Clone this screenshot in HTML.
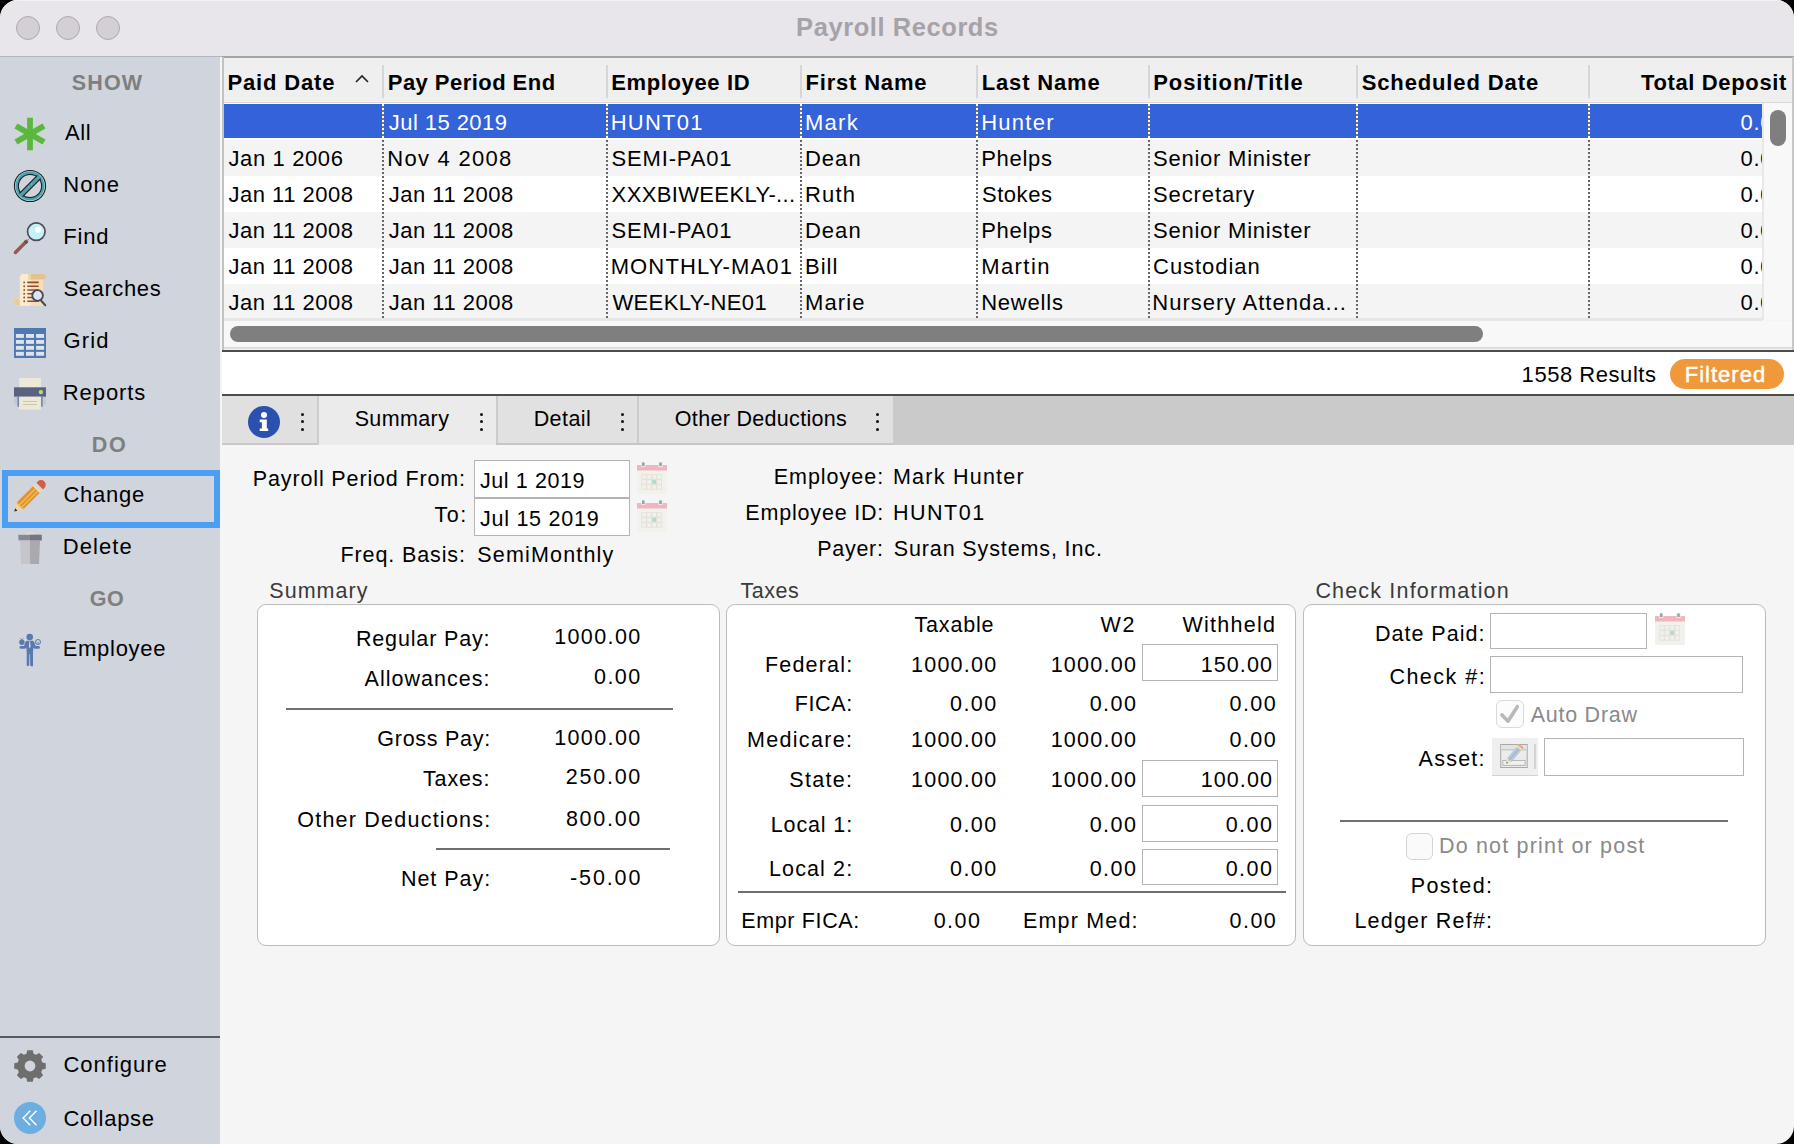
<!DOCTYPE html>
<html><head><meta charset="utf-8"><title>Payroll Records</title>
<style>
html,body{margin:0;padding:0;width:1794px;height:1144px;overflow:hidden;background:#000;}
#win{position:absolute;left:0;top:0;width:1794px;height:1144px;border-radius:18px;overflow:hidden;background:#f5f5f5;font-family:"Liberation Sans",sans-serif;}
.t{position:absolute;white-space:pre;font-family:"Liberation Sans",sans-serif;}
.r{position:absolute;box-sizing:border-box;}
svg{position:absolute;overflow:visible;}

</style></head><body>
<div id="win">
<div class="r" style="left:0px;top:0px;width:1794px;height:56px;background:#e8e6eb;"></div><div class="r" style="left:0px;top:0px;width:1794px;height:1px;background:#f3f1f5;"></div><div class="r" style="left:0px;top:56px;width:1794px;height:1px;background:#b3b5bc;"></div><svg style="left:15px;top:15px" width="26" height="26"><circle cx="13" cy="13" r="11.5" fill="#d4cfd5" stroke="#aea8ae" stroke-width="1"/></svg><svg style="left:55px;top:15px" width="26" height="26"><circle cx="13" cy="13" r="11.5" fill="#d4cfd5" stroke="#aea8ae" stroke-width="1"/></svg><svg style="left:95px;top:15px" width="26" height="26"><circle cx="13" cy="13" r="11.5" fill="#d4cfd5" stroke="#aea8ae" stroke-width="1"/></svg><div class="r" style="left:0px;top:57px;width:220px;height:1087px;background:#cfd4dd;"></div><div class="r" style="left:0px;top:1036px;width:220px;height:2px;background:#555a60;"></div><div class="r" style="left:2px;top:470px;width:218px;height:58px;border:6px solid #4a9ff5;"></div><div class="r" style="left:222px;top:57px;width:1572px;height:295px;background:#f5f5f5;"></div><div class="r" style="left:222px;top:56px;width:1572px;height:2px;background:#a4a4a4;"></div><div class="r" style="left:222px;top:57px;width:2px;height:293px;background:#c2c2c2;"></div><div class="r" style="left:1792px;top:57px;width:2px;height:293px;background:#c8c8c8;"></div><div class="r" style="left:224px;top:58px;width:1568px;height:44px;background:#efefef;"></div><div class="r" style="left:224px;top:102px;width:1568px;height:2px;background:#dad8d3;"></div><div class="r" style="left:224px;top:103px;width:1538px;height:216px;background:#ffffff;"></div><div class="r" style="left:224px;top:104px;width:1538px;height:34px;background:#3362d9;"></div><div class="r" style="left:224px;top:140px;width:1538px;height:36px;background:#f3f4f3;"></div><div class="r" style="left:224px;top:176px;width:1538px;height:36px;background:#ffffff;"></div><div class="r" style="left:224px;top:212px;width:1538px;height:36px;background:#f3f4f3;"></div><div class="r" style="left:224px;top:248px;width:1538px;height:36px;background:#ffffff;"></div><div class="r" style="left:224px;top:284px;width:1538px;height:34px;background:#f3f4f3;"></div><div class="r" style="left:224px;top:318px;width:1538px;height:3px;background:#e6e6e6;"></div><div class="r" style="left:224px;top:321px;width:1568px;height:26px;background:#f8f8f8;"></div><div class="r" style="left:224px;top:347px;width:1568px;height:2px;background:#dedede;"></div><div class="r" style="left:222px;top:350px;width:1572px;height:2px;background:#4c4c4c;"></div><div class="r" style="left:1762px;top:103px;width:30px;height:217px;background:#f8f8f8;"></div><div class="r" style="left:1762px;top:103px;width:2px;height:217px;background:#e8e8e8;"></div><div class="r" style="left:1770px;top:110px;width:16px;height:36px;border-radius:8px;background:#7f7f7f"></div><div class="r" style="left:230px;top:326px;width:1253px;height:16px;border-radius:8px;background:#7f7f7f"></div><div class="r" style="left:382px;top:65px;width:2px;height:33px;background:#d6d6d6;"></div><div class="r" style="left:382px;top:104px;width:2px;height:34px;background:repeating-linear-gradient(to bottom,#fff 0,#fff 2px,#7a7468 2px,#7a7468 4px)"></div><div class="r" style="left:382px;top:140px;width:2px;height:178px;background:repeating-linear-gradient(to bottom,#666 0,#666 2px,transparent 2px,transparent 4px)"></div><div class="r" style="left:606px;top:65px;width:2px;height:33px;background:#d6d6d6;"></div><div class="r" style="left:606px;top:104px;width:2px;height:34px;background:repeating-linear-gradient(to bottom,#fff 0,#fff 2px,#7a7468 2px,#7a7468 4px)"></div><div class="r" style="left:606px;top:140px;width:2px;height:178px;background:repeating-linear-gradient(to bottom,#666 0,#666 2px,transparent 2px,transparent 4px)"></div><div class="r" style="left:800px;top:65px;width:2px;height:33px;background:#d6d6d6;"></div><div class="r" style="left:800px;top:104px;width:2px;height:34px;background:repeating-linear-gradient(to bottom,#fff 0,#fff 2px,#7a7468 2px,#7a7468 4px)"></div><div class="r" style="left:800px;top:140px;width:2px;height:178px;background:repeating-linear-gradient(to bottom,#666 0,#666 2px,transparent 2px,transparent 4px)"></div><div class="r" style="left:976px;top:65px;width:2px;height:33px;background:#d6d6d6;"></div><div class="r" style="left:976px;top:104px;width:2px;height:34px;background:repeating-linear-gradient(to bottom,#fff 0,#fff 2px,#7a7468 2px,#7a7468 4px)"></div><div class="r" style="left:976px;top:140px;width:2px;height:178px;background:repeating-linear-gradient(to bottom,#666 0,#666 2px,transparent 2px,transparent 4px)"></div><div class="r" style="left:1148px;top:65px;width:2px;height:33px;background:#d6d6d6;"></div><div class="r" style="left:1148px;top:104px;width:2px;height:34px;background:repeating-linear-gradient(to bottom,#fff 0,#fff 2px,#7a7468 2px,#7a7468 4px)"></div><div class="r" style="left:1148px;top:140px;width:2px;height:178px;background:repeating-linear-gradient(to bottom,#666 0,#666 2px,transparent 2px,transparent 4px)"></div><div class="r" style="left:1356px;top:65px;width:2px;height:33px;background:#d6d6d6;"></div><div class="r" style="left:1356px;top:104px;width:2px;height:34px;background:repeating-linear-gradient(to bottom,#fff 0,#fff 2px,#7a7468 2px,#7a7468 4px)"></div><div class="r" style="left:1356px;top:140px;width:2px;height:178px;background:repeating-linear-gradient(to bottom,#666 0,#666 2px,transparent 2px,transparent 4px)"></div><div class="r" style="left:1588px;top:65px;width:2px;height:33px;background:#d6d6d6;"></div><div class="r" style="left:1588px;top:104px;width:2px;height:34px;background:repeating-linear-gradient(to bottom,#fff 0,#fff 2px,#7a7468 2px,#7a7468 4px)"></div><div class="r" style="left:1588px;top:140px;width:2px;height:178px;background:repeating-linear-gradient(to bottom,#666 0,#666 2px,transparent 2px,transparent 4px)"></div><svg style="left:354px;top:74px" width="16" height="10"><polyline points="2,8 8,2 14,8" fill="none" stroke="#222" stroke-width="1.6"/></svg><div class="r" style="left:222px;top:352px;width:1572px;height:42px;background:#ffffff;"></div><div class="r" style="left:222px;top:394px;width:1572px;height:2px;background:#4c4c4c;"></div><div class="r" style="left:1670px;top:359px;width:114px;height:30px;border-radius:15px;background:#f0993a"></div><div class="r" style="left:222px;top:396px;width:1572px;height:49px;background:#cacaca;"></div><div class="r" style="left:222px;top:396px;width:95px;height:47px;background:#e0e0e0;"></div><div class="r" style="left:222px;top:443px;width:97px;height:2px;background:#c8c8c8;"></div><div class="r" style="left:317px;top:396px;width:2px;height:49px;background:#cdcdcd;"></div><div class="r" style="left:319px;top:396px;width:177px;height:49px;background:#ebebeb;"></div><div class="r" style="left:498px;top:396px;width:139px;height:47px;background:#e1e1e1;"></div><div class="r" style="left:496px;top:396px;width:2px;height:49px;background:#cbcbcb;"></div><div class="r" style="left:496px;top:443px;width:397px;height:2px;background:#c6c6c6;"></div><div class="r" style="left:639px;top:396px;width:254px;height:47px;background:#e1e1e1;"></div><div class="r" style="left:637px;top:396px;width:2px;height:47px;background:#cbcbcb;"></div><svg style="left:247.8px;top:405.8px" width="32" height="32"><circle cx="16" cy="16" r="16" fill="#2b51b0"/><circle cx="16" cy="8.9" r="3" fill="#fff"/><path d="M11.7 13.6 H18.8 V22.4 H20.2 V25.1 H11.7 V22.4 H13.9 V16.2 H11.7 Z" fill="#fff"/></svg><div class="r" style="left:300.5px;top:412.5px;width:3px;height:3px;border-radius:50%;background:#111"></div><div class="r" style="left:300.5px;top:420.0px;width:3px;height:3px;border-radius:50%;background:#111"></div><div class="r" style="left:300.5px;top:427.5px;width:3px;height:3px;border-radius:50%;background:#111"></div><div class="r" style="left:479.6px;top:412.5px;width:3px;height:3px;border-radius:50%;background:#111"></div><div class="r" style="left:479.6px;top:420.0px;width:3px;height:3px;border-radius:50%;background:#111"></div><div class="r" style="left:479.6px;top:427.5px;width:3px;height:3px;border-radius:50%;background:#111"></div><div class="r" style="left:620.8px;top:412.5px;width:3px;height:3px;border-radius:50%;background:#111"></div><div class="r" style="left:620.8px;top:420.0px;width:3px;height:3px;border-radius:50%;background:#111"></div><div class="r" style="left:620.8px;top:427.5px;width:3px;height:3px;border-radius:50%;background:#111"></div><div class="r" style="left:876.3px;top:412.5px;width:3px;height:3px;border-radius:50%;background:#111"></div><div class="r" style="left:876.3px;top:420.0px;width:3px;height:3px;border-radius:50%;background:#111"></div><div class="r" style="left:876.3px;top:427.5px;width:3px;height:3px;border-radius:50%;background:#111"></div><div class="r" style="left:474px;top:460px;width:156px;height:38px;background:#fff;border:1px solid #b4b4b4"></div><div class="r" style="left:474px;top:498px;width:156px;height:38px;background:#fff;border:1px solid #b4b4b4"></div><div class="r" style="left:256.5px;top:604px;width:463.0px;height:342px;background:#fff;border:1px solid #bcbcbc;border-radius:9px"></div><div class="r" style="left:726px;top:604px;width:569.5px;height:342px;background:#fff;border:1px solid #bcbcbc;border-radius:9px"></div><div class="r" style="left:1302.5px;top:604px;width:463.0px;height:342px;background:#fff;border:1px solid #bcbcbc;border-radius:9px"></div><div class="r" style="left:285.8px;top:707.8px;width:387.7px;height:2px;background:#6f6f6f"></div><div class="r" style="left:435.8px;top:847.9px;width:234.2px;height:2px;background:#6f6f6f"></div><div class="r" style="left:1142px;top:644.3px;width:135.5999999999999px;height:37.200000000000045px;background:#fff;border:1px solid #b4b4b4"></div><div class="r" style="left:1142px;top:760.2px;width:135.5999999999999px;height:37.09999999999991px;background:#fff;border:1px solid #b4b4b4"></div><div class="r" style="left:1142px;top:804.5px;width:135.5999999999999px;height:37.10000000000002px;background:#fff;border:1px solid #b4b4b4"></div><div class="r" style="left:1142px;top:848.5px;width:135.5999999999999px;height:36.799999999999955px;background:#fff;border:1px solid #b4b4b4"></div><div class="r" style="left:738px;top:891.1px;width:547.8px;height:2px;background:#6f6f6f"></div><div class="r" style="left:1490.1px;top:612.6px;width:157.20000000000005px;height:36.799999999999955px;background:#fff;border:1px solid #b4b4b4"></div><div class="r" style="left:1490.1px;top:656.3px;width:253.4000000000001px;height:37.10000000000002px;background:#fff;border:1px solid #b4b4b4"></div><div class="r" style="left:1496.1px;top:700.2px;width:27.5px;height:27.5px;border:1px solid #dadada;border-radius:6px;background:#fcfcfc"></div><svg style="left:1496px;top:700px" width="28" height="28"><polyline points="6,14.9 12,21.2 21.3,6.7" fill="none" stroke="#b9b9b9" stroke-width="3.6" stroke-linecap="round" stroke-linejoin="round"/></svg><div class="r" style="left:1492.2px;top:738px;width:45.7px;height:37.6px;background:#efefef;border-bottom:1.5px solid #d2d2d2"></div><div class="r" style="left:1544px;top:738px;width:199.5px;height:37.60000000000002px;background:#fff;border:1px solid #b4b4b4"></div><div class="r" style="left:1340.1px;top:819.6px;width:388.0px;height:2px;background:#6f6f6f"></div><div class="r" style="left:1405.9px;top:832.5px;width:27.3px;height:27.3px;border:1px solid #d4d4d4;border-radius:6px;background:#fafafa"></div><svg style="left:0;top:0" width="220" height="1144"><g stroke="#5bb83d" stroke-linecap="butt"><line x1="30.00" y1="117.80" x2="30.00" y2="150.20" stroke-width="5.8"/><line x1="15.97" y1="125.90" x2="44.03" y2="142.10" stroke-width="5.8"/><line x1="15.97" y1="142.10" x2="44.03" y2="125.90" stroke-width="5.8"/></g><circle cx="30" cy="186" r="16.1" fill="#141a1c"/><circle cx="30" cy="186" r="15.1" fill="#8ed6e0"/><circle cx="30" cy="186" r="14.3" fill="#4f9eaa"/><circle cx="30" cy="186" r="12.1" fill="#141a1c"/><circle cx="30" cy="186" r="11.1" fill="#cfd4dd"/><line x1="39" y1="177" x2="21" y2="195" stroke="#141a1c" stroke-width="5.6"/><line x1="39.5" y1="176.5" x2="20.5" y2="195.5" stroke="#4f9eaa" stroke-width="3.6"/><circle cx="30" cy="186" r="14.3" fill="none" stroke="#4f9eaa" stroke-width="0"/><rect x="28.2" y="186.6" width="0.9" height="0.9" fill="#a9dde4"/><rect x="31.2" y="183.6" width="0.9" height="0.9" fill="#a9dde4"/><line x1="15.4" y1="252.5" x2="26.6" y2="241.3" stroke="#925c4a" stroke-width="3.5" stroke-linecap="round"/><line x1="25.2" y1="242.7" x2="26.6" y2="241.3" stroke="#5a4a58" stroke-width="3.5"/><line x1="26.6" y1="241.3" x2="29" y2="238.9" stroke="#8a8290" stroke-width="1"/><circle cx="36.3" cy="231.6" r="8.75" fill="#c5f0fb" stroke="#524a5c" stroke-width="1.7"/><circle cx="38" cy="229.7" r="3" fill="#fff"/><path d="M24 274 H43 Q46 274 46 276.7 Q46 279.4 43 279.4 H42.7 V305.8 H17 Q14.2 305.8 14.2 303 V298.5 H19.8 V278 Q19.8 274 24 274 Z" fill="#fdebd0"/><path d="M31 274 H43 Q46 274 46 276.7 Q46 279.4 43 279.4 H42.7 V305.8 H31 Z" fill="#f8dcb2"/><path d="M28.5 274 H43 Q46 274 46 276.7 Q46 279.4 43 279.4 H28.5 Z" fill="#e3c193"/><path d="M28.5 274 H31 V279.4 H28.5 Z" fill="#f0d4a8"/><path d="M14.2 298.5 H19.8 V305.8 H17 Q14.2 305.8 14.2 303 Z" fill="#edcb98"/><circle cx="24.2" cy="282.40" r="0.95" fill="#8e4f2e"/><path d="M27.4 281.60 H38.3 L38.9 282.40 L38.3 283.20 H27.4 Q27 282.40 27.4 281.60 Z" fill="#8e4f2e"/><circle cx="24.2" cy="286.18" r="0.95" fill="#8e4f2e"/><path d="M27.4 285.38 H38.3 L38.9 286.18 L38.3 286.98 H27.4 Q27 286.18 27.4 285.38 Z" fill="#8e4f2e"/><circle cx="24.2" cy="289.96" r="0.95" fill="#8e4f2e"/><path d="M27.4 289.16 H38.3 L38.9 289.96 L38.3 290.76 H27.4 Q27 289.96 27.4 289.16 Z" fill="#8e4f2e"/><circle cx="24.2" cy="293.74" r="0.95" fill="#8e4f2e"/><path d="M27.4 292.94 H38.3 L38.9 293.74 L38.3 294.54 H27.4 Q27 293.74 27.4 292.94 Z" fill="#8e4f2e"/><circle cx="24.2" cy="297.52" r="0.95" fill="#8e4f2e"/><path d="M27.4 296.72 H38.3 L38.9 297.52 L38.3 298.32 H27.4 Q27 297.52 27.4 296.72 Z" fill="#8e4f2e"/><circle cx="24.2" cy="301.30" r="0.95" fill="#8e4f2e"/><path d="M27.4 300.50 H38.3 L38.9 301.30 L38.3 302.10 H27.4 Q27 301.30 27.4 300.50 Z" fill="#8e4f2e"/><line x1="41.2" y1="300.8" x2="45.3" y2="305.2" stroke="#454b55" stroke-width="2" stroke-linecap="round"/><circle cx="37.6" cy="295.5" r="5.3" fill="#dfe5f3" stroke="#454b55" stroke-width="1.8"/><rect x="14" y="328" width="32" height="30" fill="#4f78b1"/><rect x="15.9" y="334.00" width="8" height="3.9" fill="#dfe3ec"/><rect x="15.9" y="339.95" width="8" height="3.9" fill="#dfe3ec"/><rect x="15.9" y="345.90" width="8" height="3.9" fill="#dfe3ec"/><rect x="15.9" y="351.85" width="8" height="3.9" fill="#dfe3ec"/><rect x="26.0" y="334.00" width="8" height="3.9" fill="#dfe3ec"/><rect x="26.0" y="339.95" width="8" height="3.9" fill="#dfe3ec"/><rect x="26.0" y="345.90" width="8" height="3.9" fill="#dfe3ec"/><rect x="26.0" y="351.85" width="8" height="3.9" fill="#dfe3ec"/><rect x="36.1" y="334.00" width="8" height="3.9" fill="#dfe3ec"/><rect x="36.1" y="339.95" width="8" height="3.9" fill="#dfe3ec"/><rect x="36.1" y="345.90" width="8" height="3.9" fill="#dfe3ec"/><rect x="36.1" y="351.85" width="8" height="3.9" fill="#dfe3ec"/><rect x="19.2" y="378" width="21.7" height="10" fill="#ece9d9"/><rect x="14" y="387.3" width="32" height="9.5" fill="#5a6181"/><circle cx="40.9" cy="392.1" r="2.2" fill="#a6e36f"/><rect x="14" y="396.8" width="32" height="7.7" fill="#c8c9cc"/><rect x="17.5" y="396.8" width="1.4" height="10" fill="#6a78b8"/><rect x="41.2" y="396.8" width="1.4" height="10" fill="#6a78b8"/><rect x="19.2" y="396.8" width="21.7" height="12.8" fill="#ece9d9"/><rect x="23" y="401" width="14" height="0.9" fill="#c9c39f"/><rect x="23" y="404" width="14" height="0.9" fill="#c9c39f"/><g transform="translate(14.2,511.6) rotate(-45)"><polygon points="0,0 8.5,-4.7 8.5,4.7" fill="#f6d2a2"/><polygon points="0,0 3,-1.65 3,1.65" fill="#333"/><polygon points="7,-3.9 8.5,-4.7 8.5,4.7 7,3.9" fill="#e9c86a"/><rect x="8.5" y="-4.7" width="23" height="9.4" fill="#e8922f"/><rect x="8.5" y="-1.7" width="23" height="1.1" fill="#eec85a"/><rect x="8.5" y="1.7" width="23" height="1.1" fill="#eec85a"/><rect x="31.5" y="-4.7" width="4.6" height="9.4" fill="#efe7c0"/><rect x="32.9" y="-4.7" width="0.9" height="9.4" fill="#c9ccd0"/><rect x="34.7" y="-4.7" width="0.9" height="9.4" fill="#c9ccd0"/><path d="M36.1 -4.7 H38 A4.7 4.7 0 0 1 38 4.7 H36.1 Z" fill="#cf5f4c"/></g><rect x="26" y="532" width="8.5" height="2.6" fill="#d9d9db"/><rect x="18.4" y="534.8" width="23.2" height="5.6" fill="#89888e"/><rect x="30" y="534.8" width="11.6" height="5.6" fill="#76757e"/><polygon points="20,540.7 30,540.7 30,564 21,564" fill="#c6c6ca"/><polygon points="30,540.7 40,540.7 39,564 30,564" fill="#a9a9ae"/><g fill="#5a79ae"><circle cx="29.7" cy="637" r="3.3"/><path d="M27 640.8 H32.6 Q33.6 640.8 34.4 642.6 L35.6 646.1 H38.6 A1.3 1.3 0 0 1 38.6 648.7 H34.8 Q33.6 648.7 33.4 647.6 L33 652.6 V665 A1 1 0 0 1 31 665.8 H30.2 L30 654 H29.4 L29.2 665.8 H28.3 A1 1 0 0 1 26.7 665 V652.6 L26.3 647.6 Q26 648.7 24.8 648.7 H20.8 A1.3 1.3 0 0 1 20.8 646.1 H24.1 L25.2 642.6 Q26 640.8 27 640.8 Z"/><circle cx="21.9" cy="642.3" r="2.7"/><path d="M20.3 638.3 L21.9 639.8 L23.5 638.3" stroke="#5a79ae" stroke-width="0.8" fill="none"/></g><polygon points="29.3,641.2 30.1,641.2 30.5,647 29.7,648 28.9,647" fill="#d8dce6"/><circle cx="38" cy="642" r="2.5" fill="none" stroke="#5a79ae" stroke-width="1"/><path d="M36.8 642.6 Q38 643.8 39.2 642.6" stroke="#5a79ae" stroke-width="0.8" fill="none"/><polygon points="26.47,1053.70 27.22,1050.24 32.78,1050.24 33.53,1053.70 36.21,1054.80 39.18,1052.89 43.11,1056.82 41.20,1059.79 42.30,1062.47 45.76,1063.22 45.76,1068.78 42.30,1069.53 41.20,1072.21 43.11,1075.18 39.18,1079.11 36.21,1077.20 33.53,1078.30 32.78,1081.76 27.22,1081.76 26.47,1078.30 23.79,1077.20 20.82,1079.11 16.89,1075.18 18.80,1072.21 17.70,1069.53 14.24,1068.78 14.24,1063.22 17.70,1062.47 18.80,1059.79 16.89,1056.82 20.82,1052.89 23.79,1054.80" fill="#6e6e6e"/><circle cx="30" cy="1066" r="5.4" fill="#cfd4dd"/><circle cx="30" cy="1117.9" r="16" fill="#6daee0"/><polyline points="30.2,1110.8 23.1,1118 30.2,1125.2" fill="none" stroke="#fff" stroke-width="1.4"/><polyline points="36.5,1110.8 29.4,1118 36.5,1125.2" fill="none" stroke="#fff" stroke-width="1.4"/></svg><svg style="left:637px;top:461.5px" width="30" height="33"><rect x="0" y="3" width="30" height="29" fill="#f2f1ec"/><rect x="0" y="3" width="30" height="5.5" fill="#efb6bf"/><rect x="4.6" y="0" width="3.4" height="4.5" fill="#9aa0ad" stroke="#f5f5f5" stroke-width="0.8"/><rect x="21.8" y="0" width="3.4" height="4.5" fill="#9aa0ad" stroke="#f5f5f5" stroke-width="0.8"/><rect x="4.8" y="12.6" width="4.4" height="4.4" fill="#f2f1ec" stroke="#e2e0d6" stroke-width="0.8"/><rect x="4.8" y="17.7" width="4.4" height="4.4" fill="#f2f1ec" stroke="#e2e0d6" stroke-width="0.8"/><rect x="4.8" y="22.8" width="4.4" height="4.4" fill="#f2f1ec" stroke="#e2e0d6" stroke-width="0.8"/><rect x="9.9" y="12.6" width="4.4" height="4.4" fill="#f2f1ec" stroke="#e2e0d6" stroke-width="0.8"/><rect x="9.9" y="17.7" width="4.4" height="4.4" fill="#f2f1ec" stroke="#e2e0d6" stroke-width="0.8"/><rect x="9.9" y="22.8" width="4.4" height="4.4" fill="#f2f1ec" stroke="#e2e0d6" stroke-width="0.8"/><rect x="15.0" y="12.6" width="4.4" height="4.4" fill="#f2f1ec" stroke="#e2e0d6" stroke-width="0.8"/><rect x="15.0" y="17.7" width="4.4" height="4.4" fill="#a9dccf" stroke="#e2e0d6" stroke-width="0.8"/><rect x="15.0" y="22.8" width="4.4" height="4.4" fill="#f2f1ec" stroke="#e2e0d6" stroke-width="0.8"/><rect x="20.1" y="12.6" width="4.4" height="4.4" fill="#f2f1ec" stroke="#e2e0d6" stroke-width="0.8"/><rect x="20.1" y="17.7" width="4.4" height="4.4" fill="#f2f1ec" stroke="#e2e0d6" stroke-width="0.8"/><rect x="20.1" y="22.8" width="4.4" height="4.4" fill="#f2f1ec" stroke="#e2e0d6" stroke-width="0.8"/></svg><svg style="left:637px;top:499.5px" width="30" height="33"><rect x="0" y="3" width="30" height="29" fill="#f2f1ec"/><rect x="0" y="3" width="30" height="5.5" fill="#efb6bf"/><rect x="4.6" y="0" width="3.4" height="4.5" fill="#9aa0ad" stroke="#f5f5f5" stroke-width="0.8"/><rect x="21.8" y="0" width="3.4" height="4.5" fill="#9aa0ad" stroke="#f5f5f5" stroke-width="0.8"/><rect x="4.8" y="12.6" width="4.4" height="4.4" fill="#f2f1ec" stroke="#e2e0d6" stroke-width="0.8"/><rect x="4.8" y="17.7" width="4.4" height="4.4" fill="#f2f1ec" stroke="#e2e0d6" stroke-width="0.8"/><rect x="4.8" y="22.8" width="4.4" height="4.4" fill="#f2f1ec" stroke="#e2e0d6" stroke-width="0.8"/><rect x="9.9" y="12.6" width="4.4" height="4.4" fill="#f2f1ec" stroke="#e2e0d6" stroke-width="0.8"/><rect x="9.9" y="17.7" width="4.4" height="4.4" fill="#f2f1ec" stroke="#e2e0d6" stroke-width="0.8"/><rect x="9.9" y="22.8" width="4.4" height="4.4" fill="#f2f1ec" stroke="#e2e0d6" stroke-width="0.8"/><rect x="15.0" y="12.6" width="4.4" height="4.4" fill="#f2f1ec" stroke="#e2e0d6" stroke-width="0.8"/><rect x="15.0" y="17.7" width="4.4" height="4.4" fill="#a9dccf" stroke="#e2e0d6" stroke-width="0.8"/><rect x="15.0" y="22.8" width="4.4" height="4.4" fill="#f2f1ec" stroke="#e2e0d6" stroke-width="0.8"/><rect x="20.1" y="12.6" width="4.4" height="4.4" fill="#f2f1ec" stroke="#e2e0d6" stroke-width="0.8"/><rect x="20.1" y="17.7" width="4.4" height="4.4" fill="#f2f1ec" stroke="#e2e0d6" stroke-width="0.8"/><rect x="20.1" y="22.8" width="4.4" height="4.4" fill="#f2f1ec" stroke="#e2e0d6" stroke-width="0.8"/></svg><svg style="left:1654.8px;top:613px" width="30" height="33"><rect x="0" y="3" width="30" height="29" fill="#f2f1ec"/><rect x="0" y="3" width="30" height="5.5" fill="#efb6bf"/><rect x="4.6" y="0" width="3.4" height="4.5" fill="#9aa0ad" stroke="#f5f5f5" stroke-width="0.8"/><rect x="21.8" y="0" width="3.4" height="4.5" fill="#9aa0ad" stroke="#f5f5f5" stroke-width="0.8"/><rect x="4.8" y="12.6" width="4.4" height="4.4" fill="#f2f1ec" stroke="#e2e0d6" stroke-width="0.8"/><rect x="4.8" y="17.7" width="4.4" height="4.4" fill="#f2f1ec" stroke="#e2e0d6" stroke-width="0.8"/><rect x="4.8" y="22.8" width="4.4" height="4.4" fill="#f2f1ec" stroke="#e2e0d6" stroke-width="0.8"/><rect x="9.9" y="12.6" width="4.4" height="4.4" fill="#f2f1ec" stroke="#e2e0d6" stroke-width="0.8"/><rect x="9.9" y="17.7" width="4.4" height="4.4" fill="#f2f1ec" stroke="#e2e0d6" stroke-width="0.8"/><rect x="9.9" y="22.8" width="4.4" height="4.4" fill="#f2f1ec" stroke="#e2e0d6" stroke-width="0.8"/><rect x="15.0" y="12.6" width="4.4" height="4.4" fill="#f2f1ec" stroke="#e2e0d6" stroke-width="0.8"/><rect x="15.0" y="17.7" width="4.4" height="4.4" fill="#a9dccf" stroke="#e2e0d6" stroke-width="0.8"/><rect x="15.0" y="22.8" width="4.4" height="4.4" fill="#f2f1ec" stroke="#e2e0d6" stroke-width="0.8"/><rect x="20.1" y="12.6" width="4.4" height="4.4" fill="#f2f1ec" stroke="#e2e0d6" stroke-width="0.8"/><rect x="20.1" y="17.7" width="4.4" height="4.4" fill="#f2f1ec" stroke="#e2e0d6" stroke-width="0.8"/><rect x="20.1" y="22.8" width="4.4" height="4.4" fill="#f2f1ec" stroke="#e2e0d6" stroke-width="0.8"/></svg><svg style="left:1492px;top:738px" width="46" height="38"><rect x="8.7" y="6.5" width="26.5" height="23" fill="#ececec" stroke="#a9a9a9" stroke-width="1"/><rect x="9.2" y="7" width="25.5" height="4.6" fill="#e3e3e3"/><rect x="9.2" y="11.4" width="25.5" height="0.9" fill="#b5b5b5"/><rect x="10.8" y="22.4" width="22.3" height="5" fill="#f0f0f0" stroke="#b0b0b0" stroke-width="0.9"/><g transform="translate(14.4,25.6) rotate(-50)"><polygon points="0,0 4.5,-3 4.5,3" fill="#f1e7a0"/><polygon points="0,0 1.6,-1.1 1.6,1.1" fill="#555"/><rect x="4.5" y="-3" width="15" height="6" fill="#b9c7dd"/><rect x="4.5" y="-0.6" width="15" height="1.2" fill="#a3b3cc"/><rect x="19.5" y="-3" width="1.8" height="6" fill="#f1e58a"/><rect x="21.3" y="-3" width="2.2" height="6" fill="#eba39a"/></g><rect x="42.2" y="6" width="1.5" height="25" fill="#cbcbcb"/></svg>
<div class="t" style="left:796.09px;top:15.00px;font-size:25.5px;line-height:25.5px;font-weight:700;color:#a6a2a8;letter-spacing:0.568px;">Payroll Records</div>
<div class="t" style="left:71.75px;top:73.30px;font-size:21.5px;line-height:21.5px;font-weight:700;color:#7f7f7f;letter-spacing:1.150px;">SHOW</div>
<div class="t" style="left:64.88px;top:122.24px;font-size:22px;line-height:22px;letter-spacing:0.616px;">All</div>
<div class="t" style="left:63.15px;top:174.14px;font-size:22px;line-height:22px;letter-spacing:1.102px;">None</div>
<div class="t" style="left:63.15px;top:225.94px;font-size:22px;line-height:22px;letter-spacing:0.885px;">Find</div>
<div class="t" style="left:63.53px;top:277.84px;font-size:22px;line-height:22px;letter-spacing:0.597px;">Searches</div>
<div class="t" style="left:63.58px;top:329.74px;font-size:22px;line-height:22px;letter-spacing:1.095px;">Grid</div>
<div class="t" style="left:62.75px;top:381.54px;font-size:22px;line-height:22px;letter-spacing:0.925px;">Reports</div>
<div class="t" style="left:91.83px;top:435.30px;font-size:21.5px;line-height:21.5px;font-weight:700;color:#7f7f7f;letter-spacing:1.763px;">DO</div>
<div class="t" style="left:63.48px;top:484.24px;font-size:22px;line-height:22px;letter-spacing:0.742px;">Change</div>
<div class="t" style="left:62.65px;top:536.04px;font-size:22px;line-height:22px;letter-spacing:1.101px;">Delete</div>
<div class="t" style="left:89.82px;top:588.80px;font-size:21.5px;line-height:21.5px;font-weight:700;color:#7f7f7f;letter-spacing:0.551px;">GO</div>
<div class="t" style="left:62.65px;top:638.04px;font-size:22px;line-height:22px;letter-spacing:0.724px;">Employee</div>
<div class="t" style="left:63.48px;top:1054.44px;font-size:22px;line-height:22px;letter-spacing:0.997px;">Configure</div>
<div class="t" style="left:63.48px;top:1107.64px;font-size:22px;line-height:22px;letter-spacing:0.711px;">Collapse</div>
<div class="t" style="left:227.50px;top:71.80px;font-size:22px;line-height:22px;font-weight:700;letter-spacing:0.833px;">Paid Date</div>
<div class="t" style="left:387.80px;top:71.80px;font-size:22px;line-height:22px;font-weight:700;letter-spacing:0.453px;">Pay Period End</div>
<div class="t" style="left:611.20px;top:71.80px;font-size:22px;line-height:22px;font-weight:700;letter-spacing:0.638px;">Employee ID</div>
<div class="t" style="left:805.50px;top:71.80px;font-size:22px;line-height:22px;font-weight:700;letter-spacing:0.810px;">First Name</div>
<div class="t" style="left:981.70px;top:71.80px;font-size:22px;line-height:22px;font-weight:700;letter-spacing:0.846px;">Last Name</div>
<div class="t" style="left:1153.30px;top:71.80px;font-size:22px;line-height:22px;font-weight:700;letter-spacing:0.899px;">Position/Title</div>
<div class="t" style="left:1361.65px;top:71.80px;font-size:22px;line-height:22px;font-weight:700;letter-spacing:0.879px;">Scheduled Date</div>
<div class="t" style="left:1640.98px;top:71.80px;font-size:22px;line-height:22px;font-weight:700;letter-spacing:0.640px;">Total Deposit</div>
<div class="t" style="left:388.77px;top:111.84px;font-size:22px;line-height:22px;color:#fff;letter-spacing:0.440px;">Jul 15 2019</div>
<div class="t" style="left:610.65px;top:111.84px;font-size:22px;line-height:22px;color:#fff;letter-spacing:1.233px;">HUNT01</div>
<div class="t" style="left:804.95px;top:111.84px;font-size:22px;line-height:22px;color:#fff;letter-spacing:1.284px;">Mark</div>
<div class="t" style="left:981.15px;top:111.84px;font-size:22px;line-height:22px;color:#fff;letter-spacing:1.259px;">Hunter</div>
<div class="t" style="left:1740.52px;top:111.84px;font-size:22px;line-height:22px;color:#fff;letter-spacing:0.700px;width:21px;overflow:hidden;">0.00</div>
<div class="t" style="left:228.47px;top:147.94px;font-size:22px;line-height:22px;letter-spacing:0.622px;">Jan 1 2006</div>
<div class="t" style="left:387.25px;top:147.94px;font-size:22px;line-height:22px;letter-spacing:1.274px;">Nov 4 2008</div>
<div class="t" style="left:611.43px;top:147.94px;font-size:22px;line-height:22px;letter-spacing:0.860px;">SEMI-PA01</div>
<div class="t" style="left:804.95px;top:147.94px;font-size:22px;line-height:22px;letter-spacing:1.030px;">Dean</div>
<div class="t" style="left:981.15px;top:147.94px;font-size:22px;line-height:22px;letter-spacing:0.709px;">Phelps</div>
<div class="t" style="left:1153.03px;top:147.94px;font-size:22px;line-height:22px;letter-spacing:0.767px;">Senior Minister</div>
<div class="t" style="left:1740.52px;top:147.94px;font-size:22px;line-height:22px;letter-spacing:0.700px;width:21px;overflow:hidden;">0.00</div>
<div class="t" style="left:228.47px;top:183.94px;font-size:22px;line-height:22px;letter-spacing:0.495px;">Jan 11 2008</div>
<div class="t" style="left:388.77px;top:183.94px;font-size:22px;line-height:22px;letter-spacing:0.495px;">Jan 11 2008</div>
<div class="t" style="left:611.62px;top:183.94px;font-size:22px;line-height:22px;letter-spacing:0.358px;">XXXBIWEEKLY-...</div>
<div class="t" style="left:804.95px;top:183.94px;font-size:22px;line-height:22px;letter-spacing:1.230px;">Ruth</div>
<div class="t" style="left:981.93px;top:183.94px;font-size:22px;line-height:22px;letter-spacing:0.554px;">Stokes</div>
<div class="t" style="left:1153.03px;top:183.94px;font-size:22px;line-height:22px;letter-spacing:0.880px;">Secretary</div>
<div class="t" style="left:1740.52px;top:183.94px;font-size:22px;line-height:22px;letter-spacing:0.700px;width:21px;overflow:hidden;">0.00</div>
<div class="t" style="left:228.47px;top:219.94px;font-size:22px;line-height:22px;letter-spacing:0.495px;">Jan 11 2008</div>
<div class="t" style="left:388.77px;top:219.94px;font-size:22px;line-height:22px;letter-spacing:0.495px;">Jan 11 2008</div>
<div class="t" style="left:611.43px;top:219.94px;font-size:22px;line-height:22px;letter-spacing:0.860px;">SEMI-PA01</div>
<div class="t" style="left:804.95px;top:219.94px;font-size:22px;line-height:22px;letter-spacing:1.030px;">Dean</div>
<div class="t" style="left:981.15px;top:219.94px;font-size:22px;line-height:22px;letter-spacing:0.709px;">Phelps</div>
<div class="t" style="left:1153.03px;top:219.94px;font-size:22px;line-height:22px;letter-spacing:0.767px;">Senior Minister</div>
<div class="t" style="left:1740.52px;top:219.94px;font-size:22px;line-height:22px;letter-spacing:0.700px;width:21px;overflow:hidden;">0.00</div>
<div class="t" style="left:228.47px;top:255.94px;font-size:22px;line-height:22px;letter-spacing:0.495px;">Jan 11 2008</div>
<div class="t" style="left:388.77px;top:255.94px;font-size:22px;line-height:22px;letter-spacing:0.495px;">Jan 11 2008</div>
<div class="t" style="left:610.65px;top:255.94px;font-size:22px;line-height:22px;letter-spacing:1.139px;">MONTHLY-MA01</div>
<div class="t" style="left:804.95px;top:255.94px;font-size:22px;line-height:22px;letter-spacing:1.054px;">Bill</div>
<div class="t" style="left:981.15px;top:255.94px;font-size:22px;line-height:22px;letter-spacing:1.443px;">Martin</div>
<div class="t" style="left:1153.08px;top:255.94px;font-size:22px;line-height:22px;letter-spacing:0.948px;">Custodian</div>
<div class="t" style="left:1740.52px;top:255.94px;font-size:22px;line-height:22px;letter-spacing:0.700px;width:21px;overflow:hidden;">0.00</div>
<div class="t" style="left:228.47px;top:291.94px;font-size:22px;line-height:22px;letter-spacing:0.495px;">Jan 11 2008</div>
<div class="t" style="left:388.77px;top:291.94px;font-size:22px;line-height:22px;letter-spacing:0.495px;">Jan 11 2008</div>
<div class="t" style="left:612.38px;top:291.94px;font-size:22px;line-height:22px;letter-spacing:0.394px;">WEEKLY-NE01</div>
<div class="t" style="left:804.95px;top:291.94px;font-size:22px;line-height:22px;letter-spacing:1.134px;">Marie</div>
<div class="t" style="left:981.15px;top:291.94px;font-size:22px;line-height:22px;letter-spacing:0.792px;">Newells</div>
<div class="t" style="left:1152.25px;top:291.94px;font-size:22px;line-height:22px;letter-spacing:1.034px;">Nursery Attenda...</div>
<div class="t" style="left:1740.52px;top:291.94px;font-size:22px;line-height:22px;letter-spacing:0.700px;width:21px;overflow:hidden;">0.00</div>
<div class="t" style="left:1521.62px;top:364.04px;font-size:22px;line-height:22px;letter-spacing:0.541px;">1558 Results</div>
<div class="t" style="left:1684.75px;top:364.04px;font-size:22px;line-height:22px;color:#fff;letter-spacing:1.005px;-webkit-text-stroke:0.45px #fff;">Filtered</div>
<div class="t" style="left:354.66px;top:408.94px;font-size:21.5px;line-height:21.5px;letter-spacing:0.373px;">Summary</div>
<div class="t" style="left:533.66px;top:408.94px;font-size:21.5px;line-height:21.5px;letter-spacing:0.435px;">Detail</div>
<div class="t" style="left:674.84px;top:408.94px;font-size:21.5px;line-height:21.5px;letter-spacing:0.310px;">Other Deductions</div>
<div class="t" style="left:252.86px;top:468.94px;font-size:21.5px;line-height:21.5px;letter-spacing:0.853px;">Payroll Period From:</div>
<div class="t" style="left:479.97px;top:471.04px;font-size:21.5px;line-height:21.5px;letter-spacing:0.593px;">Jul 1 2019</div>
<div class="t" style="left:434.39px;top:504.84px;font-size:21.5px;line-height:21.5px;letter-spacing:1.603px;">To:</div>
<div class="t" style="left:479.97px;top:509.24px;font-size:21.5px;line-height:21.5px;letter-spacing:0.744px;">Jul 15 2019</div>
<div class="t" style="left:340.56px;top:545.04px;font-size:21.5px;line-height:21.5px;letter-spacing:0.876px;">Freq. Basis:</div>
<div class="t" style="left:477.26px;top:545.04px;font-size:21.5px;line-height:21.5px;letter-spacing:1.181px;">SemiMonthly</div>
<div class="t" style="left:773.66px;top:466.94px;font-size:21.5px;line-height:21.5px;letter-spacing:0.991px;">Employee:</div>
<div class="t" style="left:892.96px;top:466.94px;font-size:21.5px;line-height:21.5px;letter-spacing:1.243px;">Mark Hunter</div>
<div class="t" style="left:745.36px;top:503.24px;font-size:21.5px;line-height:21.5px;letter-spacing:0.809px;">Employee ID:</div>
<div class="t" style="left:892.96px;top:503.24px;font-size:21.5px;line-height:21.5px;letter-spacing:1.507px;">HUNT01</div>
<div class="t" style="left:817.16px;top:538.94px;font-size:21.5px;line-height:21.5px;letter-spacing:0.734px;">Payer:</div>
<div class="t" style="left:893.76px;top:538.94px;font-size:21.5px;line-height:21.5px;letter-spacing:0.874px;">Suran Systems, Inc.</div>
<div class="t" style="left:269.26px;top:581.04px;font-size:21.5px;line-height:21.5px;color:#3a3a3a;letter-spacing:1.040px;">Summary</div>
<div class="t" style="left:740.59px;top:580.64px;font-size:21.5px;line-height:21.5px;color:#3a3a3a;letter-spacing:0.473px;">Taxes</div>
<div class="t" style="left:1315.39px;top:581.04px;font-size:21.5px;line-height:21.5px;color:#3a3a3a;letter-spacing:1.178px;">Check Information</div>
<div class="t" style="left:355.96px;top:628.74px;font-size:21.5px;line-height:21.5px;letter-spacing:0.843px;">Regular Pay:</div>
<div class="t" style="left:554.14px;top:627.34px;font-size:21.5px;line-height:21.5px;letter-spacing:1.400px;">1000.00</div>
<div class="t" style="left:364.58px;top:668.94px;font-size:21.5px;line-height:21.5px;letter-spacing:1.022px;">Allowances:</div>
<div class="t" style="left:593.95px;top:667.24px;font-size:21.5px;line-height:21.5px;letter-spacing:1.498px;">0.00</div>
<div class="t" style="left:377.31px;top:728.64px;font-size:21.5px;line-height:21.5px;letter-spacing:0.736px;">Gross Pay:</div>
<div class="t" style="left:554.14px;top:727.64px;font-size:21.5px;line-height:21.5px;letter-spacing:1.400px;">1000.00</div>
<div class="t" style="left:422.99px;top:768.54px;font-size:21.5px;line-height:21.5px;letter-spacing:0.848px;">Taxes:</div>
<div class="t" style="left:565.82px;top:767.14px;font-size:21.5px;line-height:21.5px;letter-spacing:1.745px;">250.00</div>
<div class="t" style="left:297.24px;top:810.44px;font-size:21.5px;line-height:21.5px;letter-spacing:1.231px;">Other Deductions:</div>
<div class="t" style="left:565.88px;top:808.74px;font-size:21.5px;line-height:21.5px;letter-spacing:1.732px;">800.00</div>
<div class="t" style="left:400.96px;top:869.44px;font-size:21.5px;line-height:21.5px;letter-spacing:0.961px;">Net Pay:</div>
<div class="t" style="left:570.08px;top:868.44px;font-size:21.5px;line-height:21.5px;letter-spacing:1.871px;">-50.00</div>
<div class="t" style="left:914.49px;top:615.04px;font-size:21.5px;line-height:21.5px;letter-spacing:0.814px;">Taxable</div>
<div class="t" style="left:1100.38px;top:615.04px;font-size:21.5px;line-height:21.5px;letter-spacing:1.763px;">W2</div>
<div class="t" style="left:1182.48px;top:615.04px;font-size:21.5px;line-height:21.5px;letter-spacing:1.275px;">Withheld</div>
<div class="t" style="left:764.96px;top:654.64px;font-size:21.5px;line-height:21.5px;letter-spacing:1.186px;">Federal:</div>
<div class="t" style="left:910.94px;top:654.64px;font-size:21.5px;line-height:21.5px;letter-spacing:1.267px;">1000.00</div>
<div class="t" style="left:1050.64px;top:654.64px;font-size:21.5px;line-height:21.5px;letter-spacing:1.267px;">1000.00</div>
<div class="t" style="left:1200.64px;top:654.64px;font-size:21.5px;line-height:21.5px;letter-spacing:1.120px;">150.00</div>
<div class="t" style="left:794.66px;top:694.44px;font-size:21.5px;line-height:21.5px;letter-spacing:0.650px;">FICA:</div>
<div class="t" style="left:949.95px;top:694.44px;font-size:21.5px;line-height:21.5px;letter-spacing:1.498px;">0.00</div>
<div class="t" style="left:1089.65px;top:694.44px;font-size:21.5px;line-height:21.5px;letter-spacing:1.498px;">0.00</div>
<div class="t" style="left:1229.45px;top:694.44px;font-size:21.5px;line-height:21.5px;letter-spacing:1.498px;">0.00</div>
<div class="t" style="left:746.96px;top:730.24px;font-size:21.5px;line-height:21.5px;letter-spacing:1.328px;">Medicare:</div>
<div class="t" style="left:910.94px;top:730.24px;font-size:21.5px;line-height:21.5px;letter-spacing:1.267px;">1000.00</div>
<div class="t" style="left:1050.64px;top:730.24px;font-size:21.5px;line-height:21.5px;letter-spacing:1.267px;">1000.00</div>
<div class="t" style="left:1229.45px;top:730.24px;font-size:21.5px;line-height:21.5px;letter-spacing:1.498px;">0.00</div>
<div class="t" style="left:789.36px;top:770.14px;font-size:21.5px;line-height:21.5px;letter-spacing:1.296px;">State:</div>
<div class="t" style="left:910.94px;top:770.14px;font-size:21.5px;line-height:21.5px;letter-spacing:1.267px;">1000.00</div>
<div class="t" style="left:1050.64px;top:770.14px;font-size:21.5px;line-height:21.5px;letter-spacing:1.267px;">1000.00</div>
<div class="t" style="left:1200.64px;top:770.14px;font-size:21.5px;line-height:21.5px;letter-spacing:1.120px;">100.00</div>
<div class="t" style="left:770.76px;top:814.84px;font-size:21.5px;line-height:21.5px;letter-spacing:0.867px;">Local 1:</div>
<div class="t" style="left:949.95px;top:814.84px;font-size:21.5px;line-height:21.5px;letter-spacing:1.498px;">0.00</div>
<div class="t" style="left:1089.65px;top:814.84px;font-size:21.5px;line-height:21.5px;letter-spacing:1.498px;">0.00</div>
<div class="t" style="left:1225.65px;top:814.84px;font-size:21.5px;line-height:21.5px;letter-spacing:1.498px;">0.00</div>
<div class="t" style="left:769.06px;top:858.74px;font-size:21.5px;line-height:21.5px;letter-spacing:1.110px;">Local 2:</div>
<div class="t" style="left:949.95px;top:858.74px;font-size:21.5px;line-height:21.5px;letter-spacing:1.498px;">0.00</div>
<div class="t" style="left:1089.65px;top:858.74px;font-size:21.5px;line-height:21.5px;letter-spacing:1.498px;">0.00</div>
<div class="t" style="left:1225.65px;top:858.74px;font-size:21.5px;line-height:21.5px;letter-spacing:1.498px;">0.00</div>
<div class="t" style="left:741.16px;top:910.94px;font-size:21.5px;line-height:21.5px;letter-spacing:0.652px;">Empr FICA:</div>
<div class="t" style="left:933.65px;top:910.94px;font-size:21.5px;line-height:21.5px;letter-spacing:1.465px;">0.00</div>
<div class="t" style="left:1022.96px;top:910.94px;font-size:21.5px;line-height:21.5px;letter-spacing:1.184px;">Empr Med:</div>
<div class="t" style="left:1229.55px;top:910.94px;font-size:21.5px;line-height:21.5px;letter-spacing:1.465px;">0.00</div>
<div class="t" style="left:1374.96px;top:623.64px;font-size:21.5px;line-height:21.5px;letter-spacing:1.003px;">Date Paid:</div>
<div class="t" style="left:1389.39px;top:667.24px;font-size:21.5px;line-height:21.5px;letter-spacing:1.487px;">Check #:</div>
<div class="t" style="left:1530.68px;top:704.74px;font-size:21.5px;line-height:21.5px;color:#8a8a8a;letter-spacing:0.750px;">Auto Draw</div>
<div class="t" style="left:1418.58px;top:749.04px;font-size:21.5px;line-height:21.5px;letter-spacing:1.244px;">Asset:</div>
<div class="t" style="left:1438.96px;top:836.04px;font-size:21.5px;line-height:21.5px;color:#8a8a8a;letter-spacing:1.185px;">Do not print or post</div>
<div class="t" style="left:1410.66px;top:876.24px;font-size:21.5px;line-height:21.5px;letter-spacing:1.417px;">Posted:</div>
<div class="t" style="left:1354.46px;top:911.04px;font-size:21.5px;line-height:21.5px;letter-spacing:1.206px;">Ledger Ref#:</div>
</div>
</body></html>
